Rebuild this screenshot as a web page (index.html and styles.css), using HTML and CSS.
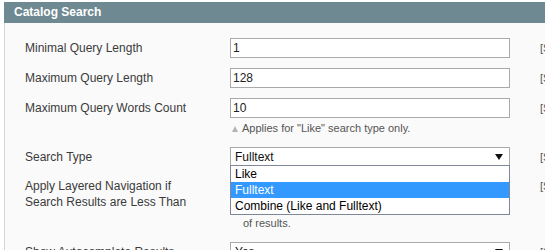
FILE: index.html
```html
<!DOCTYPE html>
<html lang="en">

<head>
    <meta charset="utf-8">
    <title>Catalog Search</title>
    <link rel="stylesheet" href="styles.css">
</head>

<body>
    <div class="page">
        <div class="section-head">Catalog Search</div>

        <div class="fieldset">
            <div class="row">
                <label class="label">Minimal Query Length</label>
                <div class="value"><input class="input-text" type="text" value="1"></div>
                <div class="scope">[STORE VIEW]</div>
            </div>

            <div class="row">
                <label class="label">Maximum Query Length</label>
                <div class="value"><input class="input-text" type="text" value="128"></div>
                <div class="scope">[STORE VIEW]</div>
            </div>

            <div class="row">
                <label class="label">Maximum Query Words Count</label>
                <div class="value">
                    <input class="input-text" type="text" value="10">
                    <p class="note arrow">Applies for "Like" search type only.</p>
                </div>
                <div class="scope">[STORE VIEW]</div>
            </div>

            <div class="row">
                <label class="label">Search Type</label>
                <div class="value">
                    <div class="select open">
                        <span>Fulltext</span>
                        <svg class="caret" width="8" height="6" viewBox="0 0 8 6"><polygon points="0,0 8,0 4,6" fill="#111"/></svg>
                        <ul class="options">
                            <li class="option">Like</li>
                            <li class="option selected">Fulltext</li>
                            <li class="option">Combine (Like and Fulltext)</li>
                        </ul>
                    </div>
                </div>
                <div class="scope">[STORE VIEW]</div>
            </div>

            <div class="row">
                <label class="label">Apply Layered Navigation if<br>Search Results are Less Than</label>
                <div class="value">
                    <input class="input-text" type="text" value="2000">
                    <p class="note low">of results.</p>
                </div>
                <div class="scope">[STORE VIEW]</div>
            </div>

            <div class="row">
                <label class="label">Show Autocomplete Results</label>
                <div class="value">
                    <div class="select">
                        <span>Yes</span>
                        <svg class="caret" width="8" height="6" viewBox="0 0 8 6"><polygon points="0,0 8,0 4,6" fill="#111"/></svg>
                    </div>
                </div>
                <div class="scope">[STORE VIEW]</div>
            </div>
        </div>
    </div>
</body>

</html>
```

FILE: styles.css
```css
* {
    margin: 0;
    padding: 0;
    box-sizing: border-box;
}

body {
    font-family: "Liberation Sans", Arial, sans-serif;
    font-size: 12px;
    color: #3a3a3a;
    background: #fff;
    overflow: hidden;
}

.page {
    width: 640px;
    padding: 2px 0 0 4px;
}

/* Kasse overskrift */
.section-head {
    height: 21px;
    line-height: 21px;
    padding: 0 10px;
    background: #6f8992;
    color: #fff;
    font-weight: bold;
    font-size: 12px;
}

.fieldset {
    height: 260px;
    padding: 10px 0 0 20px;
    background: #fafafa;
    border: 1px solid #d6d6d6;
    border-top: none;
}

/* Rækker */
.row {
    display: grid;
    grid-template-columns: 205px 280px auto;
    align-items: start;
    padding: 5px 0;
}

.label {
    line-height: 16px;
    padding-top: 2px;
}

.input-text {
    display: block;
    width: 100%;
    height: 20px;
    padding: 0 2px;
    border: 1px solid #aaa;
    background: #fff;
    font-family: "Liberation Sans", Arial, sans-serif;
    font-size: 12px;
    color: #222;
    outline: none;
}

.scope {
    padding: 2px 0 0 30px;
    line-height: 16px;
    font-size: 11px;
    color: #555;
    white-space: nowrap;
}

/* Noter under felter */
.note {
    margin: 3px 0 2px;
    padding-left: 13px;
    line-height: 14px;
    font-size: 11px;
    color: #555;
}

.note.arrow {
    padding-left: 2px;
}

.note.arrow::before {
    content: "";
    display: inline-block;
    margin-right: 4px;
    border-left: 3.5px solid transparent;
    border-right: 3.5px solid transparent;
    border-bottom: 6px solid #b4b4b4;
}

.note.low {
    margin-top: 20px;
}

/* Dropdown */
.select {
    position: relative;
    height: 19px;
    display: flex;
    align-items: center;
    justify-content: space-between;
    padding: 0 6px 0 4px;
    border: 1px solid #aaa;
    background: #fff;
    color: #111;
}

.options {
    display: none;
    position: absolute;
    top: 17px;
    left: -1px;
    right: -1px;
    list-style: none;
    border: 1px solid #7f8799;
    background: #fff;
}

.select.open .options {
    display: block;
}

.option {
    height: 16px;
    line-height: 16px;
    padding-left: 4px;
    color: #000;
}

.option.selected {
    background: #3399ff;
    color: #fff;
}
```
